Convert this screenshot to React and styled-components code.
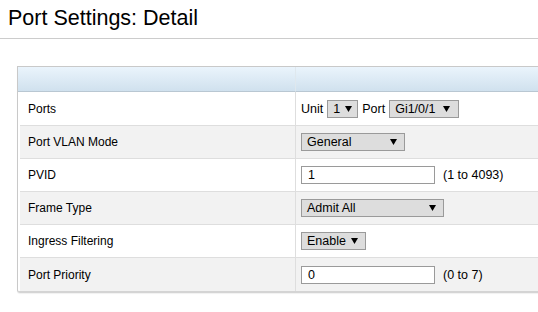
import React from "react";
import styled, { createGlobalStyle } from "styled-components";

const Global = createGlobalStyle`
  html, body { margin: 0; padding: 0; background: #fff; overflow: hidden; }
  body { font-family: "Liberation Sans", Arial, sans-serif; color: #000; }
`;

const Page = styled.div`
  width: 538px;
  height: 312px;
  overflow: hidden;
`;

const TitleBar = styled.div`
  height: 39px;
  border-bottom: 1px solid #cccccc;
  display: flex;
  align-items: center;
  padding-left: 8px;
  box-sizing: border-box;
`;

const Title = styled.h1`
  margin: 0;
  font-size: 21.5px;
  font-weight: normal;
  line-height: 1;
`;

const Panel = styled.div`
  margin: 27px 0 0 17px;
  width: 560px;
  border: 1px solid #c9c9c9;
  border-right: none;
  border-bottom: 2px solid #d4d4d4;
  border-bottom-left-radius: 3px;
  box-shadow: 0 1px 1px rgba(0, 0, 0, 0.06);
`;

const Grid = styled.div`
  display: grid;
  grid-template-columns: 277px 1fr;
`;

const HeadCell = styled.div`
  height: 24px;
  background: linear-gradient(#eaf4fc, #d0e1ee);
  border-bottom: 1px solid #b9c7d2;
  border-left: ${(p) => (p.$divider ? "1px solid #dfe8ee" : "none")};
`;

const Body = styled.div`
  padding-left: 2px;
`;

const Row = styled.div`
  display: grid;
  grid-template-columns: 275px 1fr;
  height: ${(p) => (p.$first ? 34 : 33)}px;
  box-sizing: border-box;
  border-bottom: ${(p) => (p.$last ? "none" : "1px solid #dedede")};
  background: ${(p) => (p.$alt ? "#f2f2f2" : "#ffffff")};
`;

const Label = styled.div`
  display: flex;
  align-items: center;
  padding-left: 8px;
  font-size: 12px;
`;

const Value = styled.div`
  display: flex;
  align-items: center;
  gap: 4px;
  padding-left: 5px;
  border-left: 1px solid #dedede;
  font-size: 12.5px;
`;

const Select = styled.div`
  box-sizing: border-box;
  width: ${(p) => p.$w}px;
  height: 18px;
  background: #dddddd;
  border: 1px solid #9a9a9a;
  display: flex;
  align-items: center;
  justify-content: space-between;
  padding: 0 ${(p) => p.$pr || 7}px 0 ${(p) => p.$pl || 5}px;
  font-size: 12.5px;
`;

const Arrow = styled.svg`
  width: 7px;
  height: 6px;
  display: block;
`;

const Input = styled.div`
  box-sizing: border-box;
  width: 134px;
  height: 18px;
  background: #fff;
  border: 1px solid #9a9a9a;
  display: flex;
  align-items: center;
  padding-left: 6px;
  font-size: 12.5px;
  margin-right: 4px;
`;

const Range = styled.span`
  font-size: 12.5px;
`;

const Sel = ({ w, pl, pr, children }) => (
  <Select $w={w} $pl={pl} $pr={pr}>
    <span>{children}</span>
    <Arrow viewBox="0 0 7 6">
      <path d="M0 0 H7 L3.5 6 Z" fill="#000" />
    </Arrow>
  </Select>
);

export default function App() {
  return (
    <Page>
      <Global />
      <TitleBar>
        <Title>Port Settings: Detail</Title>
      </TitleBar>
      <Panel>
        <Grid>
          <HeadCell />
          <HeadCell $divider />
        </Grid>
        <Body>
          <Row $first>
            <Label>Ports</Label>
            <Value>
              <span>Unit</span>
              <Sel w={31} pl={5} pr={5}>1</Sel>
              <span>Port</span>
              <Sel w={70} pl={5} pr={8}>Gi1/0/1</Sel>
            </Value>
          </Row>
          <Row $alt>
            <Label>Port VLAN Mode</Label>
            <Value>
              <Sel w={104}>General</Sel>
            </Value>
          </Row>
          <Row>
            <Label>PVID</Label>
            <Value>
              <Input>1</Input>
              <Range>(1 to 4093)</Range>
            </Value>
          </Row>
          <Row $alt>
            <Label>Frame Type</Label>
            <Value>
              <Sel w={143}>Admit All</Sel>
            </Value>
          </Row>
          <Row>
            <Label>Ingress Filtering</Label>
            <Value>
              <Sel w={65}>Enable</Sel>
            </Value>
          </Row>
          <Row $alt $last>
            <Label>Port Priority</Label>
            <Value>
              <Input>0</Input>
              <Range>(0 to 7)</Range>
            </Value>
          </Row>
        </Body>
      </Panel>
    </Page>
  );
}
